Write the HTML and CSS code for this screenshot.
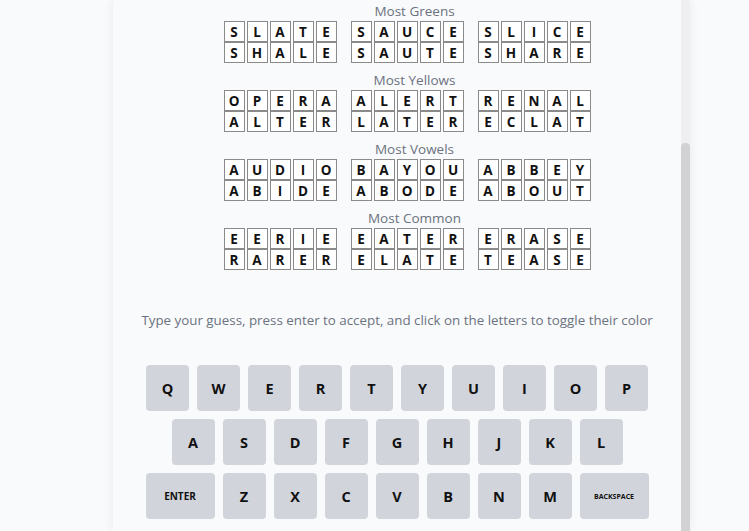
FILE: index.html
```html
<!DOCTYPE html>
<html lang="en">

<head>
  <meta charset="UTF-8">
  <title>Wordle Helper</title>
  <link rel="stylesheet" href="styles.css">
</head>

<body>
  <div class="page">
    <div class="panel">
      <div class="panel-content">

        <div class="board">
          <div class="category">
            <div class="category-label">Most Greens</div>
            <div class="word-row">
              <div class="word-pair">
                <div class="word"><span class="tile">S</span><span class="tile">L</span><span class="tile">A</span><span class="tile">T</span><span class="tile">E</span></div>
                <div class="word"><span class="tile">S</span><span class="tile">H</span><span class="tile">A</span><span class="tile">L</span><span class="tile">E</span></div>
              </div>
              <div class="word-pair">
                <div class="word"><span class="tile">S</span><span class="tile">A</span><span class="tile">U</span><span class="tile">C</span><span class="tile">E</span></div>
                <div class="word"><span class="tile">S</span><span class="tile">A</span><span class="tile">U</span><span class="tile">T</span><span class="tile">E</span></div>
              </div>
              <div class="word-pair">
                <div class="word"><span class="tile">S</span><span class="tile">L</span><span class="tile">I</span><span class="tile">C</span><span class="tile">E</span></div>
                <div class="word"><span class="tile">S</span><span class="tile">H</span><span class="tile">A</span><span class="tile">R</span><span class="tile">E</span></div>
              </div>
            </div>
          </div>

          <div class="category">
            <div class="category-label">Most Yellows</div>
            <div class="word-row">
              <div class="word-pair">
                <div class="word"><span class="tile">O</span><span class="tile">P</span><span class="tile">E</span><span class="tile">R</span><span class="tile">A</span></div>
                <div class="word"><span class="tile">A</span><span class="tile">L</span><span class="tile">T</span><span class="tile">E</span><span class="tile">R</span></div>
              </div>
              <div class="word-pair">
                <div class="word"><span class="tile">A</span><span class="tile">L</span><span class="tile">E</span><span class="tile">R</span><span class="tile">T</span></div>
                <div class="word"><span class="tile">L</span><span class="tile">A</span><span class="tile">T</span><span class="tile">E</span><span class="tile">R</span></div>
              </div>
              <div class="word-pair">
                <div class="word"><span class="tile">R</span><span class="tile">E</span><span class="tile">N</span><span class="tile">A</span><span class="tile">L</span></div>
                <div class="word"><span class="tile">E</span><span class="tile">C</span><span class="tile">L</span><span class="tile">A</span><span class="tile">T</span></div>
              </div>
            </div>
          </div>

          <div class="category">
            <div class="category-label">Most Vowels</div>
            <div class="word-row">
              <div class="word-pair">
                <div class="word"><span class="tile">A</span><span class="tile">U</span><span class="tile">D</span><span class="tile">I</span><span class="tile">O</span></div>
                <div class="word"><span class="tile">A</span><span class="tile">B</span><span class="tile">I</span><span class="tile">D</span><span class="tile">E</span></div>
              </div>
              <div class="word-pair">
                <div class="word"><span class="tile">B</span><span class="tile">A</span><span class="tile">Y</span><span class="tile">O</span><span class="tile">U</span></div>
                <div class="word"><span class="tile">A</span><span class="tile">B</span><span class="tile">O</span><span class="tile">D</span><span class="tile">E</span></div>
              </div>
              <div class="word-pair">
                <div class="word"><span class="tile">A</span><span class="tile">B</span><span class="tile">B</span><span class="tile">E</span><span class="tile">Y</span></div>
                <div class="word"><span class="tile">A</span><span class="tile">B</span><span class="tile">O</span><span class="tile">U</span><span class="tile">T</span></div>
              </div>
            </div>
          </div>

          <div class="category">
            <div class="category-label">Most Common</div>
            <div class="word-row">
              <div class="word-pair">
                <div class="word"><span class="tile">E</span><span class="tile">E</span><span class="tile">R</span><span class="tile">I</span><span class="tile">E</span></div>
                <div class="word"><span class="tile">R</span><span class="tile">A</span><span class="tile">R</span><span class="tile">E</span><span class="tile">R</span></div>
              </div>
              <div class="word-pair">
                <div class="word"><span class="tile">E</span><span class="tile">A</span><span class="tile">T</span><span class="tile">E</span><span class="tile">R</span></div>
                <div class="word"><span class="tile">E</span><span class="tile">L</span><span class="tile">A</span><span class="tile">T</span><span class="tile">E</span></div>
              </div>
              <div class="word-pair">
                <div class="word"><span class="tile">E</span><span class="tile">R</span><span class="tile">A</span><span class="tile">S</span><span class="tile">E</span></div>
                <div class="word"><span class="tile">T</span><span class="tile">E</span><span class="tile">A</span><span class="tile">S</span><span class="tile">E</span></div>
              </div>
            </div>
          </div>
        </div>

        <p class="instructions">Type your guess, press enter to accept, and click on the letters to toggle their color</p>

        <div class="keyboard">
          <div class="key-row">
            <button class="key">Q</button>
            <button class="key">W</button>
            <button class="key">E</button>
            <button class="key">R</button>
            <button class="key">T</button>
            <button class="key">Y</button>
            <button class="key">U</button>
            <button class="key">I</button>
            <button class="key">O</button>
            <button class="key">P</button>
          </div>
          <div class="key-row">
            <button class="key">A</button>
            <button class="key">S</button>
            <button class="key">D</button>
            <button class="key">F</button>
            <button class="key">G</button>
            <button class="key">H</button>
            <button class="key">J</button>
            <button class="key">K</button>
            <button class="key">L</button>
          </div>
          <div class="key-row">
            <button class="key wide enter">ENTER</button>
            <button class="key">Z</button>
            <button class="key">X</button>
            <button class="key">C</button>
            <button class="key">V</button>
            <button class="key">B</button>
            <button class="key">N</button>
            <button class="key">M</button>
            <button class="key wide backspace">BACKSPACE</button>
          </div>
        </div>

      </div>

      <div class="scrollbar">
        <div class="scroll-thumb"></div>
      </div>
    </div>
  </div>
</body>

</html>
```

FILE: styles.css
```css
body {
  margin: 0;
  background-color: #f9fafb;
  font-family: "Open Sans", "Noto Sans", sans-serif;
  overflow: hidden;
}

.page {
  height: 531px;
  padding-left: 113px;
  display: flex;
}

.panel {
  width: 577px;
  display: flex;
  background-color: #f9fafb;
  box-shadow: 0 0 10px rgba(0, 0, 0, 0.07);
}

.panel-content {
  flex: 1;
  padding-top: 1px;
}

/* scrolled list of suggested words */

.category {
  margin-bottom: 7px;
}

.category + .category {
  margin-top: 0.5px;
}

.category-label {
  height: 20px;
  line-height: 20px;
  padding-left: 35px;
  text-align: center;
  font-size: 13.5px;
  color: #6b7280;
}

.word-row {
  display: flex;
  justify-content: center;
  padding-left: 6px;
}

.word-pair {
  margin-left: 14px;
}

.word {
  display: flex;
  gap: 2px;
}

.tile {
  width: 19px;
  height: 19px;
  border: 1px solid #8a8a8a;
  background: white;
  display: flex;
  align-items: center;
  justify-content: center;
  font-size: 13.5px;
  font-weight: bold;
  color: #111;
}

.instructions {
  margin: 40px 0 0;
  line-height: 20px;
  text-align: center;
  font-size: 13.35px;
  color: #6b7280;
}

/* keyboard */

.keyboard {
  margin-top: 35px;
}

.key-row {
  display: flex;
  justify-content: center;
  margin-bottom: 8px;
}

.key {
  width: 43px;
  height: 46px;
  margin: 0 4px;
  padding: 0;
  border: none;
  border-radius: 4px;
  background-color: #d1d5db;
  font-family: "Open Sans", "Noto Sans", sans-serif;
  font-size: 14.5px;
  font-weight: bold;
  color: #111;
}

.key.wide {
  width: 69px;
}

.enter {
  font-size: 10px;
}

.backspace {
  font-size: 7px;
}

/* fake scrollbar of the panel */

.scrollbar {
  width: 9px;
  background-color: #efeff1;
  display: flex;
  flex-direction: column;
}

.scroll-thumb {
  flex: 1;
  margin-top: 143px;
  background-color: #d2d2d5;
  border-radius: 4px 4px 0 0;
}
```
